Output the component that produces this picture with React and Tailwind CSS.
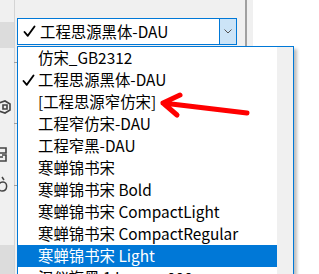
import React from "react";

const fonts = [
  { name: "仿宋_GB2312" },
  { name: "工程思源黑体-DAU", checked: true },
  { name: "[工程思源窄仿宋]" },
  { name: "工程窄仿宋-DAU" },
  { name: "工程窄黑-DAU" },
  { name: "寒蝉锦书宋" },
  { name: "寒蝉锦书宋 Bold" },
  { name: "寒蝉锦书宋 CompactLight" },
  { name: "寒蝉锦书宋 CompactRegular" },
  { name: "寒蝉锦书宋 Light", selected: true },
  { name: "汉仪旗黑 1 Lamaa 000" },
];

const uiFont = { fontFamily: '"Noto Sans CJK SC", "Noto Sans", sans-serif' };

function Check() {
  return (
    <svg width="13" height="13" viewBox="0 0 13 13" className="shrink-0">
      <path d="M1.5 7 L4.8 10.8 L11.5 1.5" fill="none" stroke="#000" strokeWidth="1.9" strokeLinecap="round" strokeLinejoin="round" />
    </svg>
  );
}

export default function App() {
  return (
    <div className="relative w-[319px] h-[274px] overflow-hidden bg-white flex" style={uiFont}>
      {/* left tool strip */}
      <div className="w-[15px] h-full shrink-0 bg-[#f0f0f0] border-r border-[#d4d4d4] flex flex-col">
        <div className="h-[22px] shrink-0" />
        <div className="h-[26px] shrink-0 bg-[#dcdcdc]" />
        <div className="h-[52px] shrink-0" />
        <div className="h-[14px] shrink-0 flex items-center">
          <svg width="14" height="14" viewBox="0 0 14 14">
            <path d="M2 3 L8 1 L13 4 L13 10 L8 13 L2 11 Z M6 5 L10 5 L10 9 L6 9 Z" fill="none" stroke="#444" strokeWidth="1.6" transform="translate(-3 0)" />
          </svg>
        </div>
        <div className="h-[32px] shrink-0" />
        <div className="h-[16px] shrink-0 flex items-center">
          <svg width="14" height="16" viewBox="0 0 14 16">
            <path d="M0 2 H6 V7 H0 M2 9 H6 V15 H0 M-2 11 H3" fill="none" stroke="#444" strokeWidth="1.6" />
          </svg>
        </div>
        <div className="h-[14px] shrink-0" />
        <div className="h-[16px] shrink-0 flex items-center">
          <svg width="14" height="16" viewBox="0 0 14 16">
            <path d="M2 1 L4 4 M3 6 C8 6 8 15 2 15 C-3 15 -3 6 3 6" fill="none" stroke="#444" strokeWidth="1.5" />
          </svg>
        </div>
        <div className="flex-1" />
        <div className="h-[29px] shrink-0 bg-[#dcdcdc]" />
      </div>

      {/* property panel */}
      <div className="w-[230px] h-full shrink-0 bg-[#f0f0f0] pt-[18px] pl-[2px]">
        <div className="w-[220px] h-[27px] bg-white border border-[#0078d7] flex items-center">
          <div className="flex-1 flex items-center pl-[5px] gap-[4px] text-[15.4px] text-black leading-none">
            <Check />
            <span>工程思源黑体-DAU</span>
          </div>
          <div className="w-[17px] h-full bg-[#cce4f7] border-l border-[#0078d7] flex items-center justify-center">
            <svg width="8" height="5" viewBox="0 0 8 5">
              <path d="M0.5 0.5 L4 4 L7.5 0.5" fill="none" stroke="#555" strokeWidth="1" />
            </svg>
          </div>
        </div>
      </div>
      <div className="w-[2px] h-full shrink-0 bg-[#a0a0a0]" />
      <div className="w-[6px] h-full shrink-0 bg-[#f0f0f0]" />
      <div className="flex-1 h-full bg-white" />

      {/* small ticks on the strip edge */}
      <div className="absolute left-[14px] top-[62px] w-[3px] h-px bg-[#a0a0a0]" />
      <div className="absolute left-[14px] top-[123px] w-[3px] h-px bg-[#a0a0a0]" />
      <div className="absolute left-[14px] top-[185px] w-[3px] h-px bg-[#a0a0a0]" />

      {/* open dropdown list */}
      <div className="absolute left-[17px] top-[46px] w-[277px] h-[240px] bg-white border border-[#0078d7] flex shadow-[3px_3px_3px_rgba(0,0,0,0.25)]">
        <div className="flex-1 flex flex-col">
          {fonts.map((f) => (
            <div
              key={f.name}
              className={
                "h-[22px] shrink-0 flex items-center text-[15.4px] leading-none " +
                (f.selected ? "bg-[#0078d7] text-white" : "text-black")
              }
            >
              <div className="w-[20px] flex justify-end pr-[3px]">{f.checked ? <Check /> : null}</div>
              <span className="whitespace-nowrap">{f.name}</span>
            </div>
          ))}
        </div>
        <div className="w-[16px] h-full bg-[#f0f0f0]" />
      </div>

      {/* red annotation arrow */}
      <svg className="absolute left-0 top-0 pointer-events-none" width="319" height="274" viewBox="0 0 319 274">
        <path d="M247 113 L163 103 M180 95 L163 103 L177 115" fill="none" stroke="#ff0000" strokeWidth="5" strokeLinecap="round" strokeLinejoin="round" />
      </svg>
    </div>
  );
}
